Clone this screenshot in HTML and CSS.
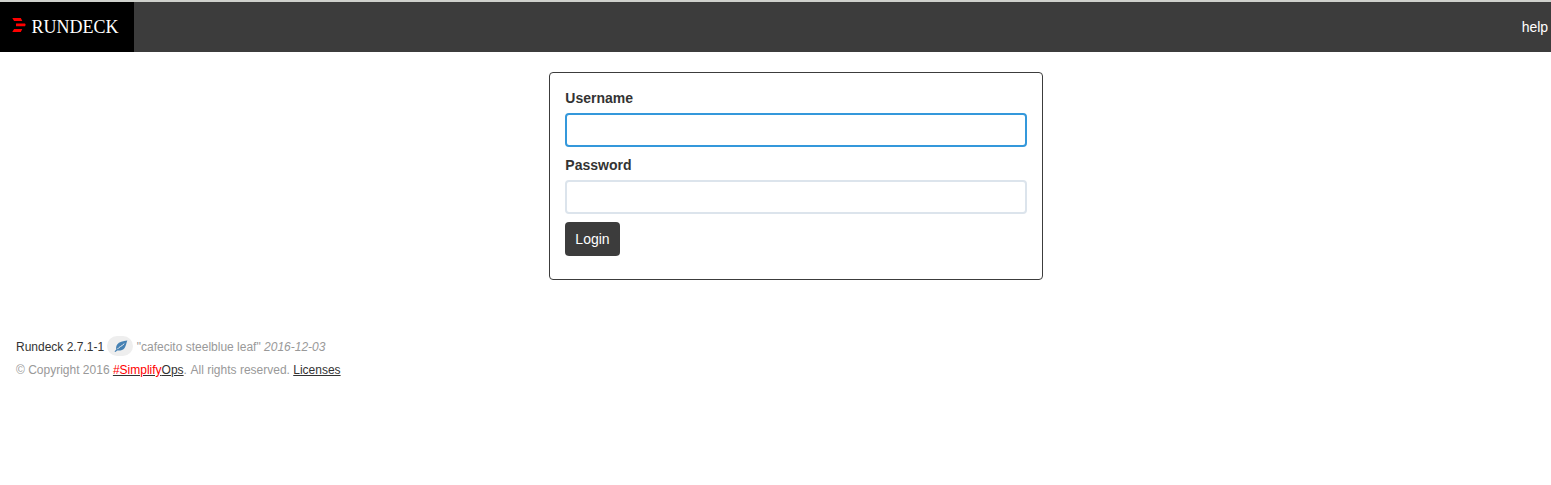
FILE: index.html
```html
<!DOCTYPE html>
<html lang="en">
<head>
<meta charset="utf-8">
<title>Rundeck - Login</title>
<link rel="stylesheet" href="styles.css">
</head>
<body>
<header class="navbar">
  <a class="brand">
    <svg class="logo" width="14" height="14" viewBox="0 0 14 14" fill="#f00"><path d="M.3 0h8.500l1.500 3H2.100zM4 5.500h9l.7 1.300-.7 1.400H4zM2.100 11h8.200l-1.500 3H.3z"/></svg>
    <span>RUNDECK</span>
  </a>
  <a class="help">help</a>
</header>
<main class="login">
  <form class="panel">
    <label class="label" for="login">Username</label>
    <input class="field field-active" id="login" type="text">
    <label class="label" for="password">Password</label>
    <input class="field" id="password" type="password">
    <button class="button" type="button">Login</button>
  </form>
</main>
<footer class="footer">
  <div class="line"><span class="version">Rundeck 2.7.1-1</span> <span class="badge"><svg class="leaf" width="14" height="13" viewBox="0 0 14 13"><path fill="#4682b4" d="M13.300.5C9 .8 5 2 3.200 4.500 2 6.200 2 8 2.200 9.500L.5 11.500l.9.6 1.900-1.600c3 .3 5.700-.3 7.300-2.500C12 6 12.300 3 13.300.5z"/><path d="M3.300 9.200C5 6.800 8 6.300 10.300 3.600" stroke="#eee" stroke-width="1" fill="none"/></svg></span> <span>"cafecito steelblue leaf"</span> <em>2016-12-03</em></div>
  <div class="line">© Copyright 2016 <a class="link"><span class="red">#Simplify</span>Ops</a>. <span class="rights">All rights reserved. <a class="link">Licenses</a></span></div>
</footer>
</body>
</html>
```
FILE: styles.css
```css
* { box-sizing: border-box; }
body { margin: 0; background: #fff; color: #333; font: 14px/20px "Liberation Sans", Arial, sans-serif; }
.navbar { display: flex; justify-content: space-between; height: 52px; border-top: 2px solid #cfd1cc; background: #3c3c3c; color: #fff; }
.brand { display: flex; align-items: center; width: 134px; padding-left: 12px; background: #000; font: 18px/20px "Liberation Serif", "Times New Roman", serif; }
.logo { margin: -4px 5.500px 0 0; }
.help { padding: 15px 2.850px 15px 0; }
.login { display: flex; padding: 20px 0 0 549px; }
.panel { display: flex; flex-direction: column; align-items: flex-start; width: 494px; height: 208px; padding: 15px; border: 1px solid #3c3c3c; border-radius: 4px; }
.label { margin-bottom: 5px; padding-left: .3px; font-weight: bold; }
.field { width: 462px; height: 34px; margin: 0 0 8px; padding: 4px 10px; border: 2px solid #dce4ec; border-radius: 4px; background: #fff; outline: none; font: inherit; }
.field-active { border-color: #3498db; }
.button { width: 55px; height: 34px; padding: 0; border: 0; border-radius: 4px; background: #3c3c3c; color: #fff; font: inherit; }
.footer { padding: 56px 16px 0; color: #999; font-size: 12px; line-height: 23px; }
.line { height: 23px; white-space: nowrap; }
.version { color: #333; }
.badge { display: inline-flex; align-items: center; justify-content: center; width: 26px; height: 20px; margin: -2px 0 2px; border-radius: 10px; background: #eee; vertical-align: middle; }
.leaf { margin: 1px 0 0 1px; }
.link { color: #333; text-decoration: underline; }
.rights { margin-left: .25px; }
.red { color: #f00; }
```
